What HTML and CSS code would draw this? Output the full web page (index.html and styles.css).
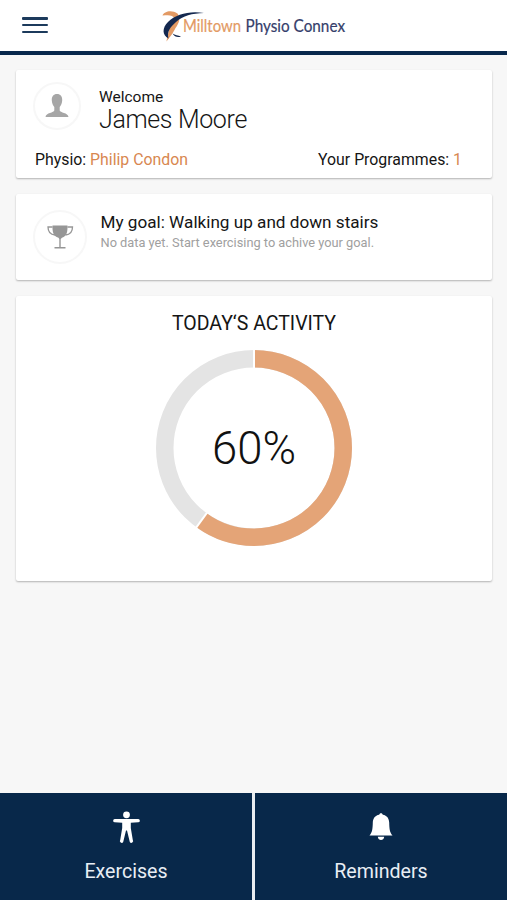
FILE: index.html
```html
<!DOCTYPE html>
<html lang="en">
<head>
<meta charset="utf-8">
<title>Milltown Physio Connex</title>
<link rel="stylesheet" href="styles.css">
</head>
<body>
<header class="header">
  <button class="menu" aria-label="Menu"><span></span><span></span><span></span></button>
  <svg class="logo" width="200" height="42" viewBox="158 5 200 42">
    <path d="M162.500 15.500C164 11 172 9.500 177.500 13.500C181 18.500 179 23 175.500 28C173 33 171.500 35 166.500 41.500C167 37 168 35 168.500 32C167.500 27 175 23 174.500 18.500C173 14.500 168 15 162.500 15.500Z" fill="#e39a64"/>
    <path d="M204 13C190 10.500 176 14 168 22C162 28 162 35 168.500 38.500C166.500 31 171 26.500 176 22C183 15.500 192 13.500 204 13Z" fill="#14284f"/>
    <path d="M172.500 33.500C175 35.500 178 35 181 36.500C178 37.800 174.500 37 172.500 33.500Z" fill="#14284f"/>
    <text class="brand orange" x="183" y="32" textLength="58" lengthAdjust="spacingAndGlyphs">Milltown</text>
    <text class="brand navy" x="245.500" y="32" textLength="99.500" lengthAdjust="spacingAndGlyphs">Physio Connex</text>
  </svg>
</header>
<main class="content">
  <section class="card profile">
    <div class="person">
      <div class="avatar">
        <svg width="24" height="26" viewBox="0 0 24 26"><path d="M12 1C8.500 1 6.500 3.500 6.800 7.500C7 10.500 8 12.500 9.300 14V17.500C9 19.800 1 19.500.500 24H23.500C23 19.500 15 19.800 14.700 17.500V14C16 12.500 17 10.500 17.200 7.500C17.500 3.500 15.500 1 12 1Z" fill="#a6a6a6"/></svg>
      </div>
      <div>
        <div class="welcome">Welcome</div>
        <div class="name">James Moore</div>
      </div>
    </div>
    <div class="facts">
      <div>Physio: <span class="accent">Philip Condon</span></div>
      <div>Your Programmes: <span class="accent">1</span></div>
    </div>
  </section>
  <section class="card goal">
    <div class="avatar large">
      <svg width="27" height="25" viewBox="0 0 27 25"><path d="M5.500.500H20.500C20.700 6 20 11.500 15 12.800L13.700 14V22H18.500V23.500H7.500V22H12.300V14L11.500 12.800C6 11.500 5.300 6 5.500.500Z" fill="#969696"/><path d="M5.500 2H1C1 6.500 3 9.500 8 10M20.500 2H25.500C25.500 6.500 23.500 9.500 18.500 10" fill="none" stroke="#969696" stroke-width="1.300"/></svg>
    </div>
    <div>
      <div class="goal-title">My goal: Walking up and down stairs</div>
      <div class="goal-note">No data yet. Start exercising to achive your goal.</div>
    </div>
  </section>
  <section class="card activity">
    <h1 class="title">TODAY‘S ACTIVITY</h1>
    <svg class="ring" width="196" height="196" viewBox="-98 -98 196 196">
      <g fill="none" stroke-width="17.500">
        <circle r="89.250" stroke="#e4e4e4"/>
        <circle r="89.250" stroke="#e4a477" pathLength="100" stroke-dasharray="60 40" transform="rotate(-90)"/>
      </g>
      <path d="M0 -78V-99M-45.850 63.100L-58.190 80.090" stroke="#fff" stroke-width="2"/>
      <text class="percent" x="0" y="16" text-anchor="middle" textLength="84" lengthAdjust="spacingAndGlyphs">60%</text>
    </svg>
  </section>
</main>
<nav class="tabs">
  <a class="tab">
    <svg width="28" height="34" viewBox="0 0 28 34"><circle cx="14.500" cy="4.800" r="3.400" fill="#fff"/><path d="M2.800 9H26.200A1.500 1.500 0 0 1 26.200 12.300L18.800 12.800V18L20.800 30A1.500 1.500 0 0 1 17.800 32L15 20.500H14L11.200 32A1.500 1.500 0 0 1 8.200 30L10.200 18V12.800L2.800 12.300A1.500 1.500 0 0 1 2.800 9Z" fill="#fff"/></svg>
    <span>Exercises</span>
  </a>
  <a class="tab">
    <svg width="28" height="34" viewBox="0 0 28 34"><path d="M14 3.300C15 3.300 15.600 4 15.800 4.800C20 5.500 22 8.500 22.200 12.500C22.400 18.500 22.500 22 25.500 25.500H2.500C5.500 22 5.600 18.500 5.800 12.500C6 8.500 8 5.500 12.200 4.800C12.400 4 13 3.300 14 3.300ZM10.800 26.700H17.200C17 29 15.500 30 14 30S11 29 10.800 26.700Z" fill="#fff"/></svg>
    <span>Reminders</span>
  </a>
</nav>
</body>
</html>
```
FILE: styles.css
```css
* { box-sizing: border-box; }
body {
  margin: 0;
  height: 900px;
  display: flex;
  flex-direction: column;
  background: #f7f7f7;
  color: #151515;
  font-family: Roboto, sans-serif;
}
.header {
  height: 55px;
  flex: none;
  display: flex;
  align-items: flex-start;
  padding: 5px 22px 0;
  background: #fff;
  border-bottom: 4px solid #08284c;
}
.menu {
  width: 26px;
  height: 16px;
  margin: 12px 110px 0 0;
  padding: 0;
  border: 0;
  background: none;
  display: flex;
  flex-direction: column;
  justify-content: space-between;
}
.menu span { width: 26px; height: 2.5px; border-radius: 1px; background: #1c3a5c; }
.logo { flex: none; overflow: visible; }
.brand { font-family: Lato, sans-serif; font-size: 17px; }
.orange { fill: #e39a64; stroke: #e39a64; stroke-width: .2px; }
.navy { fill: #353e6b; stroke: #353e6b; stroke-width: .2px; }
.content {
  flex: 1;
  display: flex;
  flex-direction: column;
  gap: 16px;
  padding: 15px 15px 0 16px;
}
.card { background: #fff; border-radius: 2px; box-shadow: 0 1px 2px rgba(0, 0, 0, .28); }
.profile { height: 108px; padding: 12px 30px 0 17px; }
.person { display: flex; gap: 18px; }
.avatar {
  flex: none;
  width: 48px;
  height: 48px;
  border: 2px solid #f7f7f7;
  border-radius: 50%;
  display: flex;
  align-items: center;
  justify-content: center;
}
.avatar.large { width: 54px; height: 54px; }
.welcome { margin-top: 6px; font-size: 15.5px; line-height: 18px; }
.name { font-size: 25px; font-weight: 300; letter-spacing: -.35px; line-height: 28px; }
.facts { display: flex; justify-content: space-between; margin: 16px 0 0 2px; font-size: 15.85px; line-height: 20px; }
.accent { color: #d88750; }
.goal { height: 86px; display: flex; gap: 13.5px; padding: 16px 16px 0 17px; }
.goal-title { margin-top: 1px; font-size: 17.15px; line-height: 22px; }
.goal-note { font-size: 12.8px; line-height: 20px; color: #a0a0a0; }
.activity { height: 285px; display: flex; flex-direction: column; align-items: center; }
.title { margin: 16px 0 14px; font-size: 19.5px; font-weight: 400; line-height: 24px; }
.percent { font-size: 46px; font-weight: 300; fill: #111; }
.tabs { height: 107px; flex: none; display: flex; gap: 3px; background: #e9edf1; }
.tab {
  flex: 1;
  display: flex;
  flex-direction: column;
  align-items: center;
  padding-top: 17px;
  gap: 15.5px;
  background: #08284a;
  color: #e8eef5;
  font-size: 19.6px;
  line-height: 24px;
}
```
